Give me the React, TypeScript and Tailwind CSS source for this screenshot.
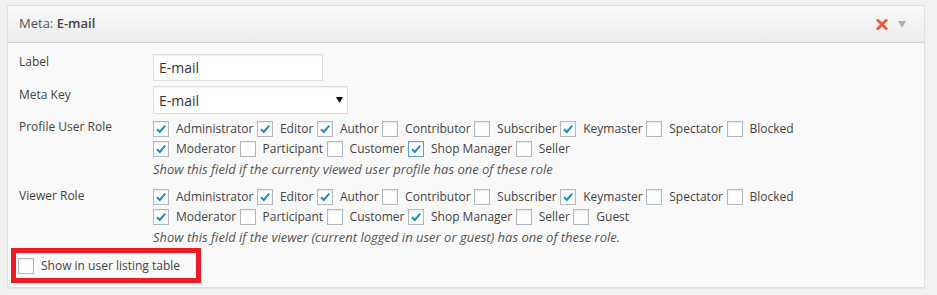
import React from "react";

type Role = { name: string; checked?: boolean; focus?: boolean };

const profileRows: Role[][] = [
  [
    { name: "Administrator", checked: true },
    { name: "Editor", checked: true },
    { name: "Author", checked: true },
    { name: "Contributor" },
    { name: "Subscriber" },
    { name: "Keymaster", checked: true },
    { name: "Spectator" },
    { name: "Blocked" },
  ],
  [
    { name: "Moderator", checked: true },
    { name: "Participant" },
    { name: "Customer" },
    { name: "Shop Manager", checked: true, focus: true },
    { name: "Seller" },
  ],
];

const viewerRows: Role[][] = [
  profileRows[0],
  [
    { name: "Moderator", checked: true },
    { name: "Participant" },
    { name: "Customer" },
    { name: "Shop Manager", checked: true },
    { name: "Seller" },
    { name: "Guest" },
  ],
];

function Checkbox({ checked, focus }: { checked?: boolean; focus?: boolean }) {
  return (
    <span
      className={`flex h-4 w-4 shrink-0 items-center justify-center border bg-white shadow-[inset_0_1px_2px_rgba(0,0,0,0.1)] ${
        focus ? "border-[#5b9dd9] shadow-[0_0_2px_rgba(30,140,190,0.8)]" : "border-[#b4b9be]"
      }`}
    >
      {checked && (
        <svg width="12" height="12" viewBox="0 0 12 12">
          <path d="M2 6.2 L4.8 9 L10.2 2.6" fill="none" stroke="#1e8cbe" strokeWidth="2" strokeLinejoin="miter" />
        </svg>
      )}
    </span>
  );
}

function RoleLine({ roles }: { roles: Role[] }) {
  return (
    <div className="flex h-5 items-center">
      {roles.map((r, i) => (
        <div key={i} className="mr-[3.5px] flex items-center">
          <Checkbox checked={r.checked} focus={r.focus} />
          <span className="ml-[7px]">{r.name}</span>
        </div>
      ))}
    </div>
  );
}

export default function App() {
  return (
    <div
      className="h-[295px] w-[937px] bg-[#f1f1f1] pl-[7px] pt-[5px] text-[12px] text-[#444]"
      style={{ fontFamily: '"Open Sans", "Liberation Sans", sans-serif' }}
    >
      <div className="flex h-[283px] w-[918px] flex-col border border-[#dfdfdf] bg-[#f9f9f9] shadow-[0_1px_1px_rgba(0,0,0,0.04)]">
        {/* header */}
        <div className="flex h-[37px] shrink-0 items-center border-b border-[#cfcfcf] bg-gradient-to-b from-[#f9f9f9] to-[#ececec] pl-[11px] pr-[18px] text-[13px]">
          <span className="text-[#555]">
            Meta: <span className="font-semibold text-[#464646]">E-mail</span>
          </span>
          <div className="ml-auto flex items-center gap-[10px]">
            <svg width="12" height="11" viewBox="0 0 12 11">
              <path d="M2 1.5 L10 9.5 M10 1.5 L2 9.5" stroke="#ee5a40" strokeWidth="3" strokeLinecap="square" />
            </svg>
            <svg width="8" height="7" viewBox="0 0 8 7">
              <path d="M0 0 H8 L4 7 Z" fill="#b0b0b0" />
            </svg>
          </div>
        </div>

        {/* body */}
        <div className="flex flex-col pl-[11px] pt-[9px]">
          <div className="flex h-[33px]">
            <div className="w-[134px] leading-5">Label</div>
            <div className="mt-[2px] flex h-[27px] w-[170px] items-center border border-[#ddd] bg-white px-[5px] text-[14px] text-[#333] shadow-[inset_0_1px_2px_rgba(0,0,0,0.07)]">
              E-mail
            </div>
          </div>

          <div className="flex h-[32px]">
            <div className="w-[134px] leading-5">Meta Key</div>
            <div className="mt-[1px] flex h-[28px] w-[195px] items-center border border-[#ddd] bg-white pl-[5px] pr-[4px] text-[14px] text-[#333] shadow-[inset_0_1px_2px_rgba(0,0,0,0.07)]">
              E-mail
              <svg className="ml-auto" width="7" height="6" viewBox="0 0 7 6">
                <path d="M0 0 H7 L3.5 6 Z" fill="#111" />
              </svg>
            </div>
          </div>

          <div className="flex">
            <div className="w-[134px] leading-5">Profile User Role</div>
            <div className="flex flex-col pt-[2px]">
              {profileRows.map((row, i) => (
                <RoleLine key={i} roles={row} />
              ))}
              <div className="h-5 text-[13px] leading-5 italic text-[#555]">
                Show this field if the currenty viewed user profile has one of these role
              </div>
            </div>
          </div>

          <div className="mt-[7px] flex">
            <div className="w-[134px] leading-5">Viewer Role</div>
            <div className="flex flex-col pt-[1px]">
              {viewerRows.map((row, i) => (
                <RoleLine key={i} roles={row} />
              ))}
              <div className="h-5 text-[13px] leading-5 italic text-[#555]">
                Show this field if the viewer (current logged in user or guest) has one of these role.
              </div>
            </div>
          </div>
        </div>

        <div className="ml-[3px] mt-[1px] flex h-[35px] w-[190px] items-center border-[5px] border-[#ed1c24] pl-[2px]">
          <Checkbox />
          <span className="ml-[7px]">Show in user listing table</span>
        </div>
      </div>
    </div>
  );
}
